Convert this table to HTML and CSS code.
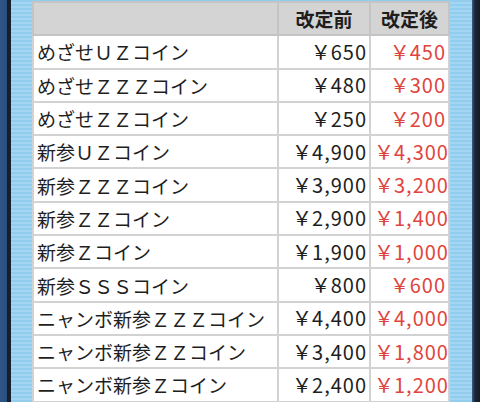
FILE: index.html
```html
<!DOCTYPE html>
<html lang="ja">
<head>
<meta charset="utf-8">
<link rel="stylesheet" href="styles.css">
</head>
<body>
<div class="page">
  <div class="edge edge-left"></div>
  <div class="panel">
    <table class="price-table">
      <colgroup>
        <col class="c-name"><col class="c-before"><col class="c-after">
      </colgroup>
      <thead>
        <tr><th></th><th>改定前</th><th>改定後</th></tr>
      </thead>
      <tbody>
        <tr><td class="name">めざせＵＺコイン</td><td class="price"><span class="yen">￥</span>650</td><td class="price new"><span class="yen">￥</span>450</td></tr>
        <tr><td class="name">めざせＺＺＺコイン</td><td class="price"><span class="yen">￥</span>480</td><td class="price new"><span class="yen">￥</span>300</td></tr>
        <tr><td class="name">めざせＺＺコイン</td><td class="price"><span class="yen">￥</span>250</td><td class="price new"><span class="yen">￥</span>200</td></tr>
        <tr><td class="name">新参ＵＺコイン</td><td class="price"><span class="yen">￥</span>4,900</td><td class="price new"><span class="yen">￥</span>4,300</td></tr>
        <tr><td class="name">新参ＺＺＺコイン</td><td class="price"><span class="yen">￥</span>3,900</td><td class="price new"><span class="yen">￥</span>3,200</td></tr>
        <tr><td class="name">新参ＺＺコイン</td><td class="price"><span class="yen">￥</span>2,900</td><td class="price new"><span class="yen">￥</span>1,400</td></tr>
        <tr><td class="name">新参Ｚコイン</td><td class="price"><span class="yen">￥</span>1,900</td><td class="price new"><span class="yen">￥</span>1,000</td></tr>
        <tr><td class="name">新参ＳＳＳコイン</td><td class="price"><span class="yen">￥</span>800</td><td class="price new"><span class="yen">￥</span>600</td></tr>
        <tr><td class="name">ニャンボ新参ＺＺＺコイン</td><td class="price"><span class="yen">￥</span>4,400</td><td class="price new"><span class="yen">￥</span>4,000</td></tr>
        <tr><td class="name">ニャンボ新参ＺＺコイン</td><td class="price"><span class="yen">￥</span>3,400</td><td class="price new"><span class="yen">￥</span>1,800</td></tr>
        <tr><td class="name">ニャンボ新参Ｚコイン</td><td class="price"><span class="yen">￥</span>2,400</td><td class="price new"><span class="yen">￥</span>1,200</td></tr>
      </tbody>
    </table>
  </div>
  <div class="edge edge-right"></div>
</div>
</body>
</html>
```
FILE: styles.css
```css
html, body {
  margin: 0;
  padding: 0;
  width: 480px;
  height: 402px;
  overflow: hidden;
  background: #1b2434;
}
.page {
  display: flex;
  width: 480px;
  height: 402px;
  font-family: "Noto Sans CJK JP", "Noto Sans", sans-serif;
}
.edge-left {
  width: 11px;
  background: linear-gradient(to right, #2e5788 0, #2a4f7e 7px, #141b28 7px, #1a2232 11px);
  flex: none;
}
.edge-right {
  width: 10px;
  background: linear-gradient(to right, #3a5d86 0, #1b2434 3px, #111722 10px);
  flex: none;
}
.panel {
  flex: 1;
  padding: 0 22px 0 21px;
  background: repeating-linear-gradient(to bottom, #92cdee 0, #92cdee 2px, #a2d6f2 2px, #a2d6f2 4px);
}
.price-table {
  width: 416px;
  border-collapse: collapse;
  table-layout: fixed;
  margin-top: 1px;
  background: #fff;
}
.c-name { width: 245px; }
.c-before { width: 92px; }
.c-after { width: 79px; }
.price-table th,
.price-table td {
  border: 2px solid #d2d2d2;
  height: 31.3px;
  padding: 0 3px;
  white-space: nowrap;
  overflow: hidden;
}
.price-table th {
  background: #d4d4d4;
  border-color: #c4c4c4;
  font-size: 19px;
  font-weight: bold;
  color: #1e1e1e;
  text-align: center;
}
.price-table td {
  font-size: 19px;
  color: #1e1e1e;
  line-height: 1;
}
.price-table .name { text-align: left; }
.price-table .price {
  text-align: right;
  padding-right: 2px;
  font-size: 20px;
  letter-spacing: 1px;
}
.price-table .yen {
  letter-spacing: 0;
}
.price-table .new { color: #df453e; }
```
